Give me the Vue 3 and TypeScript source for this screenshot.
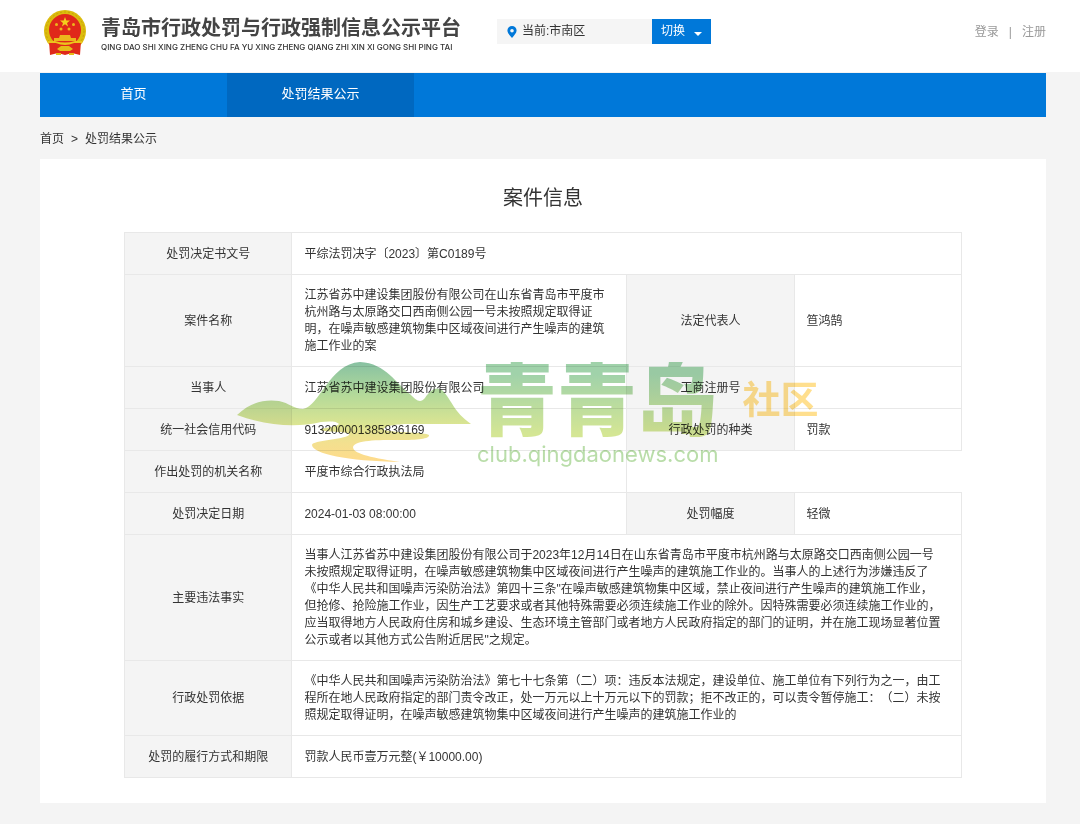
<script setup lang="ts">
import { ref } from 'vue'

interface Cell {
  text: string
  head?: boolean
  span?: number
}

const district = ref('市南区')
const nav = [
  { label: '首页', active: false },
  { label: '处罚结果公示', active: true },
]

const rows: Cell[][] = [
  [{ text: '处罚决定书文号', head: true }, { text: '平综法罚决字〔2023〕第C0189号', span: 3 }],
  [
    { text: '案件名称', head: true },
    { text: '江苏省苏中建设集团股份有限公司在山东省青岛市平度市杭州路与太原路交口西南侧公园一号未按照规定取得证明，在噪声敏感建筑物集中区域夜间进行产生噪声的建筑施工作业的案' },
    { text: '法定代表人', head: true },
    { text: '笪鸿鹄' },
  ],
  [
    { text: '当事人', head: true },
    { text: '江苏省苏中建设集团股份有限公司' },
    { text: '工商注册号', head: true },
    { text: '' },
  ],
  [
    { text: '统一社会信用代码', head: true },
    { text: '913200001385836169' },
    { text: '行政处罚的种类', head: true },
    { text: '罚款' },
  ],
  [{ text: '作出处罚的机关名称', head: true }, { text: '平度市综合行政执法局' }],
  [
    { text: '处罚决定日期', head: true },
    { text: '2024-01-03 08:00:00' },
    { text: '处罚幅度', head: true },
    { text: '轻微' },
  ],
  [
    { text: '主要违法事实', head: true },
    {
      text: '当事人江苏省苏中建设集团股份有限公司于2023年12月14日在山东省青岛市平度市杭州路与太原路交口西南侧公园一号未按照规定取得证明，在噪声敏感建筑物集中区域夜间进行产生噪声的建筑施工作业的。当事人的上述行为涉嫌违反了《中华人民共和国噪声污染防治法》第四十三条"在噪声敏感建筑物集中区域，禁止夜间进行产生噪声的建筑施工作业，但抢修、抢险施工作业，因生产工艺要求或者其他特殊需要必须连续施工作业的除外。因特殊需要必须连续施工作业的，应当取得地方人民政府住房和城乡建设、生态环境主管部门或者地方人民政府指定的部门的证明，并在施工现场显著位置公示或者以其他方式公告附近居民"之规定。',
      span: 3,
    },
  ],
  [
    { text: '行政处罚依据', head: true },
    {
      text: '《中华人民共和国噪声污染防治法》第七十七条第（二）项：违反本法规定，建设单位、施工单位有下列行为之一，由工程所在地人民政府指定的部门责令改正，处一万元以上十万元以下的罚款；拒不改正的，可以责令暂停施工：（二）未按照规定取得证明，在噪声敏感建筑物集中区域夜间进行产生噪声的建筑施工作业的',
      span: 3,
    },
  ],
  [{ text: '处罚的履行方式和期限', head: true }, { text: '罚款人民币壹万元整(￥10000.00)', span: 3 }],
]
</script>

<template>
  <div class="page">
    <header class="header">
      <svg class="emblem" viewBox="0 0 44 46" aria-hidden="true">
        <circle cx="22" cy="21" r="21" fill="#dcbc0c" />
        <circle cx="22" cy="21" r="19" fill="none" stroke="#c6a30a" stroke-width="1" stroke-dasharray="2 2" />
        <path d="M6 31 L13 33 Q22 37 31 33 L38 31 L37 45 L29 43 L22 45 L15 43 L7 45 Z" fill="#df2a1b" />
        <circle cx="22" cy="20" r="16" fill="#e0281a" />
        <path d="M22 7 L23.3 10.6 L27 10.6 L24 12.9 L25.1 16.5 L22 14.3 L18.9 16.5 L20 12.9 L17 10.6 L20.7 10.6 Z" fill="#f4cf1c" />
        <g fill="#ecb61c">
          <circle cx="13.5" cy="14.5" r="1.5" />
          <circle cx="30.5" cy="14.5" r="1.5" />
          <circle cx="18" cy="19" r="1.5" />
          <circle cx="26" cy="19" r="1.5" />
          <path d="M17 25 H27 L28 28 H33 V31 H11 V28 H16 Z" />
        </g>
        <path d="M5 31 H12 Q22 34 32 31 H39 V33 H31 Q22 37 13 33 H5 Z" fill="#ecc61c" />
        <path d="M14 39 L18 36 H26 L30 39 L27 41 H17 Z M13 43 H18 V45 H13 Z M26 43 H31 V45 H26 Z" fill="#e6bd18" />
      </svg>
      <div class="brand">
        <h1>青岛市行政处罚与行政强制信息公示平台</h1>
        <p>QING DAO SHI XING ZHENG CHU FA YU XING ZHENG QIANG ZHI XIN XI GONG SHI PING TAI</p>
      </div>
      <div class="switcher">
        <div class="current">
          <svg viewBox="0 0 10 12" class="pin" aria-hidden="true">
            <path d="M5 0 A4.6 4.6 0 0 1 9.6 4.6 C9.6 7.4 6.8 9.6 5 12 C3.2 9.6 0.4 7.4 0.4 4.6 A4.6 4.6 0 0 1 5 0 Z M5 3 A1.8 1.8 0 1 0 5 6.6 A1.8 1.8 0 1 0 5 3 Z" fill="#0078d9" fill-rule="evenodd" />
          </svg>
          <span>当前:{{ district }}</span>
        </div>
        <button type="button" class="switch">
          切换
          <svg viewBox="0 0 8 4" class="caret" aria-hidden="true"><path d="M0 0 H8 L4 4 Z" fill="#fff" /></svg>
        </button>
      </div>
      <div class="account">
        <a href="#">登录</a><span>|</span><a href="#">注册</a>
      </div>
    </header>

    <div class="wrap">
      <nav class="nav">
        <a v-for="n in nav" :key="n.label" href="#" :class="{ active: n.active }">{{ n.label }}</a>
      </nav>
      <div class="crumbs">
        <a href="#">首页</a><span>&gt;</span><a href="#">处罚结果公示</a>
      </div>
      <main class="card">
        <h2>案件信息</h2>
        <div class="sheet">
          <table>
            <colgroup>
              <col class="c1" /><col class="c2" /><col class="c1" /><col class="c1" />
            </colgroup>
            <tbody>
              <tr v-for="(row, i) in rows" :key="i">
                <component
                  :is="cell.head ? 'th' : 'td'"
                  v-for="(cell, j) in row"
                  :key="j"
                  :colspan="cell.span"
                  :scope="cell.head ? 'row' : undefined"
                >{{ cell.text }}</component>
              </tr>
            </tbody>
          </table>
          <div class="watermark">
            <svg class="hill" viewBox="0 0 234 100" aria-hidden="true">
              <defs>
                <linearGradient id="hill" x1="0" y1="0" x2="0" y2="1">
                  <stop offset="0" stop-color="#87c1a2" />
                  <stop offset="0.5" stop-color="#b2d99a" />
                  <stop offset="1" stop-color="#dce592" />
                </linearGradient>
                <linearGradient id="river" x1="0" y1="0" x2="0" y2="1">
                  <stop offset="0" stop-color="#dce592" />
                  <stop offset="0.5" stop-color="#f3e08f" />
                  <stop offset="1" stop-color="#ffdb8c" />
                </linearGradient>
              </defs>
              <path d="M0 53 C14 40 28 37 42 39 C52 41 57 47 66 47 C83 44 92 2 123 0 C149 1 160 23 173 32 C179 38 183 42 188 36 C194 27 200 24 206 29 C216 40 216 49 234 62 H102 C100 59 92 59 84 60 C60 66 30 64 0 53 Z" fill="url(#hill)" />
              <path d="M102 62 C100 65 83 66 83 68 C95 71 115 69 112 73 C106 78 76 78 75 83 C76 92 110 99 163 100 C130 95 116 91 116 85 C118 78 140 78 163 78 C180 78 193 77 192 73 C188 70 160 71 147 68 C145 64 160 62 172 62 Z" fill="url(#river)" />
            </svg>
            <div class="wm-text">
              <div class="wm-name">青青岛</div>
              <div class="wm-url">club.qingdaonews.com</div>
            </div>
            <div class="wm-side">社区</div>
          </div>
        </div>
      </main>
    </div>
  </div>
</template>

<style>
body {
  background: #f4f4f4;
}
</style>

<style scoped>
.page {
  font-family: "Liberation Sans", "Noto Sans CJK SC", sans-serif;
  font-size: 12px;
  line-height: 17px;
  color: #333;
  text-spacing-trim: space-all;
  padding-bottom: 20px;
}
a {
  color: inherit;
  text-decoration: none;
}
.header {
  display: flex;
  align-items: flex-start;
  box-sizing: border-box;
  height: 72px;
  padding: 10px 34px 0 43px;
  background: #fff;
}
.emblem {
  flex: none;
  width: 44px;
  height: 46px;
}
.brand {
  width: 364px;
  margin-left: 14px;
  white-space: nowrap;
}
h1 {
  margin: 4px 0 0;
  font-size: 20px;
  line-height: 28px;
  font-weight: 700;
  color: #444;
}
.brand p {
  margin: 0;
  font-family: Inter, "Liberation Sans", sans-serif;
  font-size: 8px;
  line-height: 10px;
  font-weight: 500;
}
.switcher {
  display: flex;
  margin: 9px 0 0 32px;
}
.current {
  display: flex;
  align-items: center;
  gap: 5px;
  box-sizing: border-box;
  width: 155px;
  height: 25px;
  padding-left: 10px;
  background: #f5f5f5;
}
.pin {
  width: 10px;
  height: 12px;
}
.switch {
  display: flex;
  align-items: center;
  gap: 9px;
  width: 59px;
  height: 25px;
  padding: 0 9px;
  border: 0;
  background: #0078d9;
  color: #fff;
  font: inherit;
  white-space: nowrap;
}
.caret {
  width: 8px;
  height: 4px;
  margin-top: 4px;
}
.account {
  display: flex;
  gap: 10px;
  margin: 14px 0 0 auto;
  color: #999;
}
.wrap {
  margin: 0 34px 0 40px;
}
.nav {
  display: flex;
  height: 44px;
  margin-top: 1px;
  background: #0078d9;
  color: #fff;
  font-size: 13px;
  line-height: 42px;
  text-align: center;
}
.nav a {
  width: 187px;
}
.nav .active {
  background: #0068c0;
}
.crumbs {
  display: flex;
  gap: 7px;
  height: 42px;
  line-height: 44px;
}
.card {
  padding: 24px 84px 25px;
  background: #fff;
}
h2 {
  margin: 0 0 19px;
  font-size: 20px;
  line-height: 30px;
  font-weight: 400;
  text-align: center;
}
.sheet {
  position: relative;
}
table {
  width: 100%;
  table-layout: fixed;
  border-collapse: collapse;
}
.c1 {
  width: 20%;
}
.c2 {
  width: 40%;
}
th,
td {
  border: 1px solid #e8e8e8;
  padding: 12px 20px 11px 12px;
  height: 18px;
  font-weight: 400;
  text-align: left;
}
th {
  padding: 12px 12px 11px;
  background: #f4f4f4;
  text-align: center;
}
.watermark {
  position: absolute;
  left: 113px;
  top: 130px;
  display: flex;
  align-items: flex-start;
  white-space: nowrap;
  mix-blend-mode: multiply;
  pointer-events: none;
}
.hill {
  width: 234px;
  height: 100px;
}
.wm-text {
  margin-left: 6px;
}
.wm-name {
  font-size: 80px;
  line-height: 80px;
  font-weight: 900;
  color: transparent;
  background: linear-gradient(#a0d2aa 15%, #d4e694 90%);
  background-clip: text;
}
.wm-url {
  margin-top: 4px;
  font-family: Inter, sans-serif;
  font-size: 22px;
  line-height: 16px;
  color: #b9dda9;
}
.wm-side {
  margin: 16px 0 0 24px;
  font-size: 38px;
  line-height: 44px;
  font-weight: 700;
  color: #ffdf8e;
}
</style>
